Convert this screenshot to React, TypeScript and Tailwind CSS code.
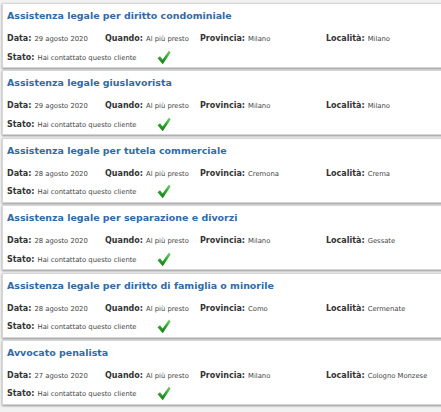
import React from "react";

type Item = {
  title: string;
  data: string;
  provincia: string;
  localita: string;
};

const items: Item[] = [
  { title: "Assistenza legale per diritto condominiale", data: "29 agosto 2020", provincia: "Milano", localita: "Milano" },
  { title: "Assistenza legale giuslavorista", data: "29 agosto 2020", provincia: "Milano", localita: "Milano" },
  { title: "Assistenza legale per tutela commerciale", data: "28 agosto 2020", provincia: "Cremona", localita: "Crema" },
  { title: "Assistenza legale per separazione e divorzi", data: "28 agosto 2020", provincia: "Milano", localita: "Gessate" },
  { title: "Assistenza legale per diritto di famiglia o minorile", data: "28 agosto 2020", provincia: "Como", localita: "Cermenate" },
  { title: "Avvocato penalista", data: "27 agosto 2020", provincia: "Milano", localita: "Cologno Monzese" },
];

function Check({ id }: { id: string }) {
  return (
    <svg width="14" height="15" viewBox="0 0 14 15" className="shrink-0">
      <defs>
        <linearGradient id={id} x1="0" y1="0" x2="0" y2="1">
          <stop offset="0" stopColor="#6fd66f" />
          <stop offset="0.5" stopColor="#2fa52f" />
          <stop offset="1" stopColor="#137a13" />
        </linearGradient>
      </defs>
      <polygon points="0.5,8.2 3,6.2 5.6,9.4 12,0.6 13.6,2.4 5.8,14.2" fill={`url(#${id})`} />
    </svg>
  );
}

function Field({ label, value }: { label: string; value: string }) {
  return (
    <span className="whitespace-nowrap">
      <span className="font-bold text-[8px] text-[#333333] mr-[3px]">{label}</span>
      <span className="text-[6.8px] text-[#444444]">{value}</span>
    </span>
  );
}

function Card({ item, idx }: { item: Item; idx: number }) {
  return (
    <div className="h-[65px] w-[calc(100%+4px)] bg-white border border-[#d6d6d6] shadow-[0_1px_2px_rgba(0,0,0,0.4)] pl-[4px] pt-[6px] flex flex-col">
      <div className="font-bold text-[9.45px] leading-[12px] text-[#2f6aa7] whitespace-nowrap">{item.title}</div>
      <div className="mt-[8px] flex leading-[12px] h-[12px] items-baseline">
        <div className="w-[98px]"><Field label="Data:" value={item.data} /></div>
        <div className="w-[95px]"><Field label="Quando:" value="Al più presto" /></div>
        <div className="w-[126px]"><Field label="Provincia:" value={item.provincia} /></div>
        <div><Field label="Località:" value={item.localita} /></div>
      </div>
      <div className="mt-[8px] flex items-center h-[12px] leading-[12px]">
        <div className="w-[150px]"><Field label="Stato:" value="Hai contattato questo cliente" /></div>
        <div className="mt-[2px]"><Check id={`g${idx}`} /></div>
      </div>
    </div>
  );
}

export default function App() {
  return (
    <div
      className="w-[441px] h-[412px] overflow-hidden bg-[#f1f1f1] pt-[3px] pl-[2px] flex flex-col gap-[2.4px]"
      style={{ fontFamily: '"DejaVu Sans", Verdana, sans-serif' }}
    >
      {items.map((it, i) => (
        <Card key={i} item={it} idx={i} />
      ))}
    </div>
  );
}
